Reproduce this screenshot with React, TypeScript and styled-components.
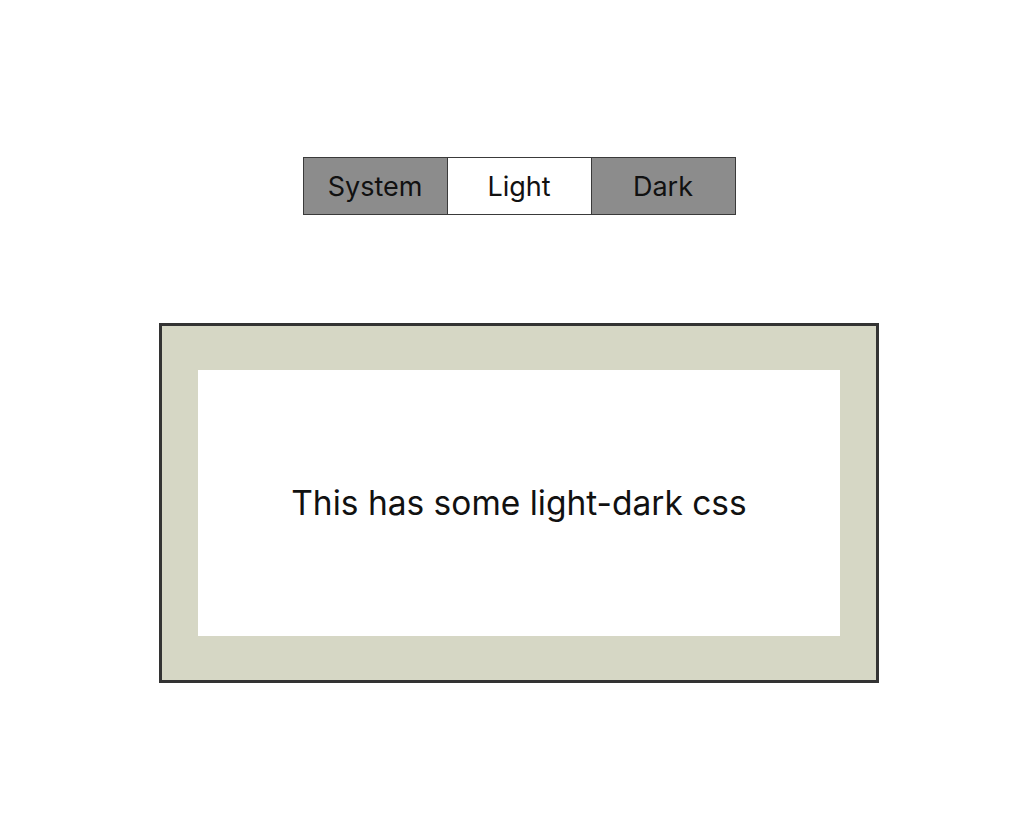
import React, { useState } from 'react';
import styled, { createGlobalStyle } from 'styled-components';

type Mode = 'system' | 'light' | 'dark';

const GlobalStyle = createGlobalStyle`
  html, body {
    margin: 0;
    background: #fff;
    font-family: Inter, 'Noto Sans', sans-serif;
    color: #111;
  }
`;

const PageStyle = styled.div`
  display: flex;
  flex-direction: column;
  align-items: center;
  padding: 157px 0 0 2px;
`;

const SwitcherStyle = styled.div`
  display: flex;
  margin-bottom: 108px;
`;

const ModeButton = styled.button<{ $active: boolean }>`
  width: 145px;
  height: 58px;
  border: 1px solid #3a3a3a;
  margin-left: -1px;
  padding: 0;
  background: ${(p) => (p.$active ? '#fff' : '#8c8c8c')};
  color: #111;
  font-family: inherit;
  font-size: 27px;
  cursor: pointer;

  &:first-child {
    margin-left: 0;
  }
`;

const FrameStyle = styled.div`
  width: 642px;
  padding: 44px 36px;
  border: 3px solid #333;
  background: #d6d7c5;
`;

const InnerStyle = styled.div`
  height: 266px;
  display: flex;
  align-items: center;
  justify-content: center;
  background: #fff;
  font-size: 33.5px;
`;

const modes: { key: Mode; label: string }[] = [
  { key: 'system', label: 'System' },
  { key: 'light', label: 'Light' },
  { key: 'dark', label: 'Dark' },
];

const App = () => {
  const [mode, setMode] = useState<Mode>('light');

  return (
    <PageStyle>
      <GlobalStyle />
      <SwitcherStyle>
        {modes.map((item) => (
          <ModeButton
            key={item.key}
            $active={mode === item.key}
            onClick={() => setMode(item.key)}>
            {item.label}
          </ModeButton>
        ))}
      </SwitcherStyle>
      <FrameStyle>
        <InnerStyle>This has some light-dark css</InnerStyle>
      </FrameStyle>
    </PageStyle>
  );
};

export default App;
